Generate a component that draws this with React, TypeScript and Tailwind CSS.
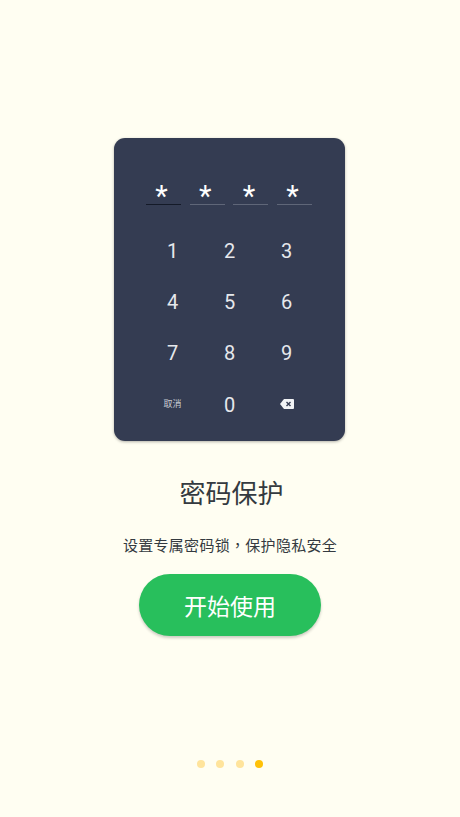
const rows = [
  ['1', '2', '3'],
  ['4', '5', '6'],
  ['7', '8', '9'],
];

const cjk = { fontFamily: '"Noto Sans CJK SC", sans-serif' };

function BackspaceIcon() {
  return (
    <svg width="14" height="10" viewBox="0 0 14 10">
      <path d="M4 0H13a1 1 0 0 1 1 1V9a1 1 0 0 1-1 1H4L0 5Z" fill="#f1f3f5" />
      <path d="M6.5 3 10.5 7M10.5 3 6.5 7" stroke="#343c52" strokeWidth="1.4" fill="none" />
    </svg>
  );
}

export default function App() {
  return (
    <div
      className="w-[460px] h-[817px] bg-[#fffef2] flex flex-col items-center pt-[138px] overflow-hidden"
      style={{ fontFamily: 'Roboto, sans-serif' }}
    >
      {/* Keypad card */}
      <div className="self-start ml-[114px] w-[231px] h-[303px] bg-[#343c52] rounded-[11px] shadow-[0_1px_3px_rgba(0,0,0,0.3)] flex flex-col items-center pt-[36px]">
        <div className="flex gap-[8.7px] w-[167px]">
          {[0, 1, 2, 3].map((i) => (
            <div
              key={i}
              className={`w-[35px] h-[31px] flex justify-center pr-[4px] text-white text-[29px] leading-[44px] border-b ${i === 0 ? 'border-[#141a28]' : 'border-[#5f6678]'}`}
            >
              *
            </div>
          ))}
        </div>
        <div className="mt-[20px] w-[171px] grid grid-cols-3">
          {rows.flat().map((n) => (
            <div key={n} className="h-[51px] flex items-center justify-center text-[20px] text-[#e6e8ec]">
              {n}
            </div>
          ))}
          <div className="h-[51px] pt-px flex items-center justify-center text-[9px] text-[#c8ccd4]" style={cjk}>
            取消
          </div>
          <div className="h-[51px] pt-[2px] flex items-center justify-center text-[20px] text-[#e6e8ec]">0</div>
          <div className="h-[51px] flex items-center justify-center">
            <BackspaceIcon />
          </div>
        </div>
      </div>

      <h1 className="mt-[31px] pl-[3px] text-[26px] leading-[40px] font-normal text-[#343a40]" style={cjk}>
        密码保护
      </h1>
      <p className="mt-[22px] text-[15px] leading-[22px] tracking-[0.3px] text-[#343a40]" style={cjk}>
        设置专属密码锁
        <span style={{ fontFamily: '"Noto Sans CJK TC", sans-serif' }}>，</span>
        保护隐私安全
      </p>

      <button
        className="mt-[18px] w-[182px] h-[62px] rounded-full bg-[#28bf5c] text-white text-[23px] shadow-[0_2px_3px_rgba(0,0,0,0.2)]"
        style={cjk}
      >
        开始使用
      </button>

      <div className="mt-[124px] flex gap-[11.5px]">
        <span className="w-[8px] h-[8px] rounded-full bg-[#ffe49c]" />
        <span className="w-[8px] h-[8px] rounded-full bg-[#ffe49c]" />
        <span className="w-[8px] h-[8px] rounded-full bg-[#ffe49c]" />
        <span className="w-[8px] h-[8px] rounded-full bg-[#ffc107]" />
      </div>
    </div>
  );
}
